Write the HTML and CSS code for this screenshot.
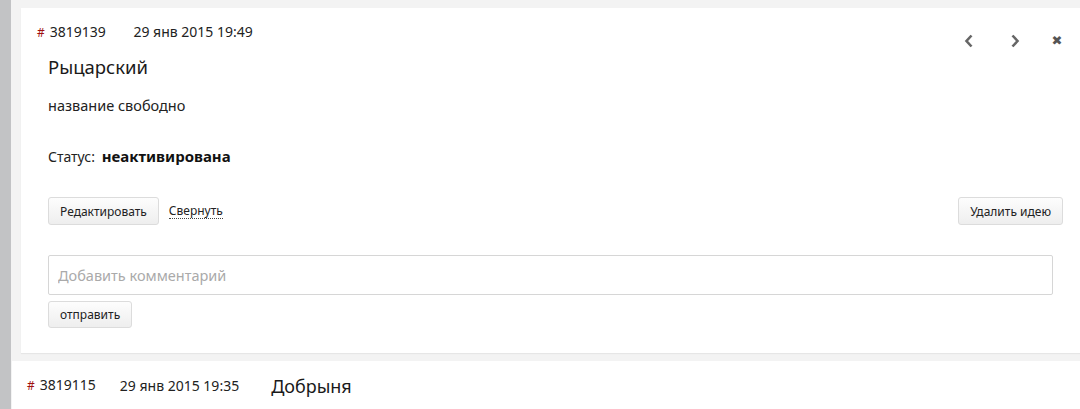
FILE: index.html
```html
<!DOCTYPE html>
<html lang="ru">

<head>
    <meta charset="UTF-8" />
    <title>Идеи</title>
    <link rel="stylesheet" href="styles.css">
</head>

<body>
    <div class="sidebar"></div>

    <div class="list">
        <div class="idea open">
            <div class="idea-head">
                <div class="meta">
                    <span class="num"><i>#</i>3819139</span>
                    <span class="date">29 янв 2015 19:49</span>
                </div>
                <div class="nav">
                    <span class="nav-btn">
                        <svg width="10" height="14" viewBox="0 0 10 14"><path d="M7.5 1.5 L2.5 7 L7.5 12.5" fill="none" stroke="#666" stroke-width="2.6" /></svg>
                    </span>
                    <span class="nav-btn">
                        <svg width="10" height="14" viewBox="0 0 10 14"><path d="M2.5 1.5 L7.5 7 L2.5 12.5" fill="none" stroke="#666" stroke-width="2.6" /></svg>
                    </span>
                    <span class="nav-btn close">✖</span>
                </div>
            </div>

            <div class="title">Рыцарский</div>
            <div class="desc">название свободно</div>

            <div class="status">Статус: <b>неактивирована</b></div>

            <div class="actions">
                <div class="left">
                    <button class="btn">Редактировать</button>
                    <a class="dotted" href="#">Свернуть</a>
                </div>
                <button class="btn">Удалить идею</button>
            </div>

            <div class="comment">
                <input type="text" placeholder="Добавить комментарий">
                <button class="btn small">отправить</button>
            </div>
        </div>

        <div class="idea row">
            <span class="num"><i>#</i>3819115</span>
            <span class="date">29 янв 2015 19:35</span>
            <span class="row-title">Добрыня</span>
        </div>
    </div>
</body>

</html>
```

FILE: styles.css
```css
body {
    margin: 0;
    display: flex;
    background-color: #f3f3f3;
    font-family: "Noto Sans", "Open Sans", sans-serif;
    font-size: 14px;
    color: #222;
    height: 409px;
    overflow: hidden;
}

.sidebar {
    width: 11px;
    flex-shrink: 0;
    background-color: #c2c3c5;
}

.list {
    flex: 1;
    padding-top: 8px;
}

.idea {
    background-color: #fff;
}

.idea.open {
    margin-left: 10px;
    padding: 16px 17px 25px 27px;
    box-shadow: 0 1px 1px #e6e6e6;
}

.idea-head {
    display: flex;
    justify-content: space-between;
    align-items: flex-start;
    line-height: 16px;
}

.num i {
    font-style: normal;
    color: #a01010;
    margin-left: -11px;
    margin-right: 5px;
    font-size: 12px;
}

.date {
    margin-left: 24px;
}

.nav {
    display: flex;
    padding-top: 10px;
    margin-bottom: -10px;
    margin-right: 1px;
}

.nav-btn {
    width: 10px;
    height: 14px;
    margin-left: 36px;
    display: flex;
    align-items: center;
    justify-content: center;
}

.nav-btn.close {
    margin-left: 32px;
    color: #555;
    font-size: 13px;
    font-family: "DejaVu Sans", sans-serif;
}

.title {
    margin-top: 15px;
    font-size: 18.5px;
    line-height: 22px;
    color: #1a1a1a;
}

.desc {
    margin-top: 19px;
    font-size: 14.5px;
    line-height: 16px;
}

.status {
    margin-top: 35px;
    line-height: 16px;
}

.status b {
    margin-left: 3px;
    font-size: 15px;
    color: #111;
}

.actions {
    margin-top: 32px;
    display: flex;
    justify-content: space-between;
    align-items: center;
}

.actions .left {
    display: flex;
    align-items: center;
}

.btn {
    font-family: inherit;
    font-size: 12px;
    color: #222;
    height: 28px;
    padding: 0 11px;
    border: 1px solid #dcdcdc;
    border-radius: 3px;
    background: linear-gradient(#fdfdfd, #eeeeee);
    cursor: pointer;
}

.btn.small {
    height: 27px;
}

.dotted {
    margin-left: 10px;
    color: #222;
    text-decoration: none;
    border-bottom: 1px dotted #444;
    font-size: 12px;
    line-height: 14px;
}

.comment {
    margin-top: 30px;
    display: flex;
    flex-direction: column;
    align-items: flex-start;
    gap: 6px;
}

.comment input {
    width: 1005px;
    height: 40px;
    box-sizing: border-box;
    border: 1px solid #d6d6d6;
    border-radius: 2px;
    padding: 0 9px;
    font-family: inherit;
    font-size: 14.5px;
}

.comment input::placeholder {
    color: #aaa;
}

.idea.row {
    margin-top: 8px;
    margin-left: 1px;
    padding: 16px 26px;
    display: flex;
    align-items: center;
    line-height: 16px;
}

.row-title {
    margin-left: 32px;
    font-size: 18px;
    color: #1a1a1a;
}
```
